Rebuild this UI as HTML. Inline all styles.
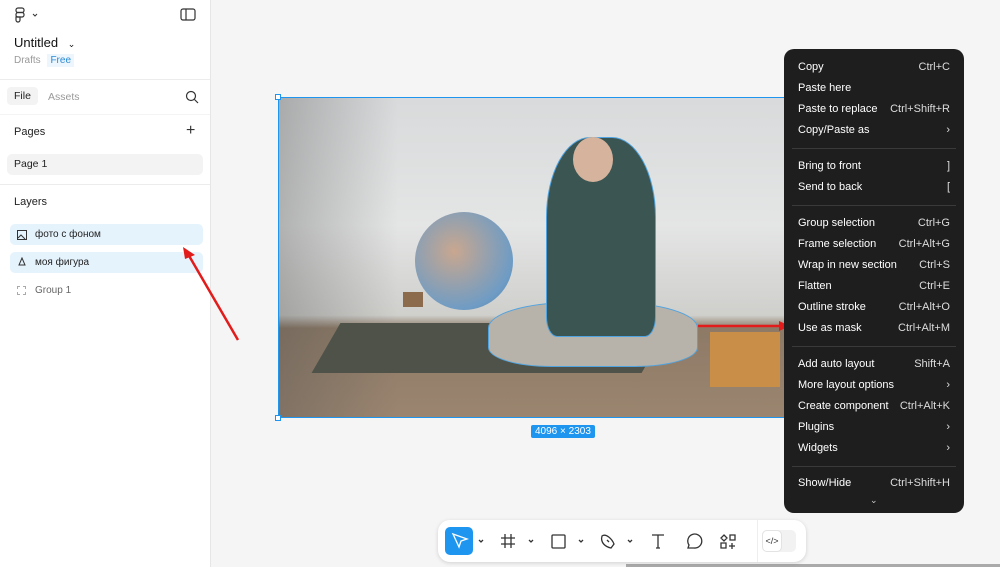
<!DOCTYPE html><html><head><meta charset="utf-8"><style>
*{margin:0;padding:0;box-sizing:border-box}
body{width:1000px;height:567px;overflow:hidden;background:#f5f5f5;font-family:"Liberation Sans",sans-serif;position:relative}
.side{position:absolute;left:0;top:0;width:211px;height:567px;background:#fff;border-right:1px solid #e6e6e6}
.a{position:absolute}
.t{font-size:11px;color:#222}
.hr{position:absolute;left:0;width:210px;height:1px;background:#ececec}
.menu{position:absolute;left:784px;top:49px;width:180px;height:464px;background:#1e1e1e;border-radius:10px;color:#fff;font-size:11px}
.mi{position:absolute;left:14px;right:14px;height:21px;line-height:21px}
.mi span{position:absolute;right:0;top:0;color:#ddd}
.sep{position:absolute;left:8px;right:8px;height:1px;background:#3a3a3a}
.tb{position:absolute;left:438px;top:520px;width:368px;height:42px;background:#fff;border-radius:12px;box-shadow:0 1px 4px rgba(0,0,0,.15)}
</style></head><body>
<div class="side">
<svg class="a" style="left:14px;top:7px" width="26" height="16" viewBox="0 0 26 16"><g fill="none" stroke="#333" stroke-width="1.2"><rect x="2" y="1" width="8" height="4.5" rx="2"/><rect x="2" y="5.5" width="8" height="4.5" rx="2"/><path d="M2 10h4v3a2 2 0 1 1-4 0z"/></g><path d="M19 7l2 2 2-2" stroke="#333" fill="none"/></svg>
<svg class="a" style="left:180px;top:8px" width="16" height="13"><rect x="1" y="1" width="14" height="11" rx="2" fill="none" stroke="#333" stroke-width="1.2"/><path d="M6 1v11" stroke="#333" stroke-width="1.2"/></svg>
<div class="a" style="left:14px;top:35px;font-size:13px;color:#111">Untitled <span style="font-size:9px;margin-left:6px">⌄</span></div>
<div class="a" style="left:14px;top:55px;font-size:10px;color:#999">Drafts <span style="color:#2a8ad4;background:#eef6fd;padding:1px 3px;margin-left:4px">Free</span></div>
<div class="hr" style="top:79px"></div>
<div class="a t" style="left:7px;top:87px;background:#f3f3f3;border-radius:4px;padding:3px 7px;font-size:10.5px">File</div>
<div class="a" style="left:48px;top:91px;font-size:10.5px;color:#999">Assets</div>
<svg class="a" style="left:185px;top:90px" width="14" height="14"><circle cx="6" cy="6" r="4.5" fill="none" stroke="#333" stroke-width="1.2"/><path d="M9.5 9.5l3.5 3.5" stroke="#333" stroke-width="1.2"/></svg>
<div class="hr" style="top:114px;background:#f4f4f4"></div>
<div class="a t" style="left:14px;top:126px">Pages</div>
<div class="a" style="left:186px;top:122px;font-size:16px;color:#333">+</div>
<div class="a t" style="left:7px;top:154px;width:196px;height:21px;background:#f3f3f3;border-radius:5px;padding:4px 7px;font-size:10.5px">Page 1</div>
<div class="hr" style="top:184px"></div>
<div class="a t" style="left:14px;top:196px">Layers</div>
<div class="a t" style="left:10px;top:224px;width:193px;height:21px;background:#e5f3fd;border-radius:5px;padding:5px 0 0 25px;font-size:10px">фото с фоном</div>
<svg class="a" style="left:17px;top:230px" width="10" height="10"><rect x=".5" y=".5" width="9" height="9" fill="none" stroke="#333"/><path d="M1 8l3-3 4 4" stroke="#333" fill="none"/></svg>
<div class="a t" style="left:10px;top:252px;width:193px;height:21px;background:#e5f3fd;border-radius:5px;padding:5px 0 0 25px;font-size:10px">моя фигура</div>
<svg class="a" style="left:17px;top:257px" width="10" height="10"><path d="M5 1L2 8h6z" fill="none" stroke="#333"/></svg>
<div class="a" style="left:35px;top:285px;font-size:10px;color:#666">Group 1</div>
<div class="a" style="left:17px;top:286px;width:9px;height:9px;border:1px dashed #aaa"></div>
</div>
<div class="a" style="left:278px;top:97px;width:508px;height:321px;background:linear-gradient(180deg,#d8dadb 0%,#e4e5e5 40%,#cfcfcc 68%,#8d7a66 72%,#9b8570 100%);overflow:hidden">
<div class="a" style="left:0;top:0;width:120px;height:321px;background:linear-gradient(90deg,rgba(80,80,80,.35),transparent)"></div>
<div class="a" style="left:137px;top:115px;width:98px;height:98px;border-radius:50%;background:radial-gradient(circle at 40% 40%,#c9a78f,#6f9cc4 70%,#4f7fa8)"></div>
<div class="a" style="left:48px;top:226px;width:330px;height:50px;background:#4e5249;transform:skewX(-30deg);"></div>
<div class="a" style="left:210px;top:205px;width:210px;height:65px;border-radius:40% 40% 30% 30%;background:#b7b2aa;border:1px solid #4fa3e0"></div>
<div class="a" style="left:268px;top:40px;width:110px;height:200px;border-radius:40% 40% 10% 10%;background:#3a5552;border:1px solid #4fa3e0"></div>
<div class="a" style="left:295px;top:40px;width:40px;height:45px;border-radius:50%;background:#d6b39c"></div>
<div class="a" style="left:432px;top:235px;width:70px;height:55px;background:#c98e48"></div>
<div class="a" style="left:125px;top:195px;width:20px;height:15px;background:#8c6b4c"></div>
</div>
<div class="a" style="left:278px;top:97px;width:508px;height:321px;border:1px solid #1e96f0"></div>
<div class="a" style="left:275px;top:94px;width:6px;height:6px;background:#fff;border:1px solid #1e96f0"></div>
<div class="a" style="left:275px;top:415px;width:6px;height:6px;background:#fff;border:1px solid #1e96f0"></div>
<div class="a" style="left:531px;top:425px;background:#1e96f0;color:#fff;font-size:10px;padding:1px 4px;border-radius:2px">4096 × 2303</div>
<svg class="a" style="left:0;top:0" width="1000" height="567"><path d="M238 340L188 254" stroke="#e21b1b" stroke-width="2.5"/><path d="M183 247l12 8-10 4z" fill="#e21b1b"/><path d="M698 326h82" stroke="#e21b1b" stroke-width="2.5"/><path d="M790 326l-11-5v10z" fill="#e21b1b"/></svg>
<div class="menu">
<div class="mi" style="top:8px">Copy<span>Ctrl+C</span></div>
<div class="mi" style="top:29px">Paste here</div>
<div class="mi" style="top:50px">Paste to replace<span>Ctrl+Shift+R</span></div>
<div class="mi" style="top:71px">Copy/Paste as<span>›</span></div>
<div class="sep" style="top:99px"></div>
<div class="mi" style="top:107px">Bring to front<span>]</span></div>
<div class="mi" style="top:128px">Send to back<span>[</span></div>
<div class="sep" style="top:156px"></div>
<div class="mi" style="top:164px">Group selection<span>Ctrl+G</span></div>
<div class="mi" style="top:185px">Frame selection<span>Ctrl+Alt+G</span></div>
<div class="mi" style="top:206px">Wrap in new section<span>Ctrl+S</span></div>
<div class="mi" style="top:227px">Flatten<span>Ctrl+E</span></div>
<div class="mi" style="top:248px">Outline stroke<span>Ctrl+Alt+O</span></div>
<div class="mi" style="top:269px">Use as mask<span>Ctrl+Alt+M</span></div>
<div class="sep" style="top:297px"></div>
<div class="mi" style="top:305px">Add auto layout<span>Shift+A</span></div>
<div class="mi" style="top:326px">More layout options<span>›</span></div>
<div class="mi" style="top:347px">Create component<span>Ctrl+Alt+K</span></div>
<div class="mi" style="top:368px">Plugins<span>›</span></div>
<div class="mi" style="top:389px">Widgets<span>›</span></div>
<div class="sep" style="top:417px"></div>
<div class="mi" style="top:424px">Show/Hide<span>Ctrl+Shift+H</span></div>
<div class="a" style="left:86px;top:446px;font-size:9px;color:#ccc">⌄</div>
</div>
<div class="a" style="left:626px;top:564px;width:374px;height:3px;background:#aaa"></div>
<div class="tb">
<div class="a" style="left:7px;top:7px;width:28px;height:28px;background:#1e96f0;border-radius:5px"></div>
<svg class="a" style="left:0;top:0" width="368" height="42" fill="none" stroke="#333" stroke-width="1.3">
<path d="M15 14l14 5-6 2-2 6z" stroke="#fff"/>
<path d="M41 20l2 2 2-2M91 20l2 2 2-2M141 20l2 2 2-2M190 20l2 2 2-2"/>
<path d="M67 14v14M73 14v14M63 18h14M63 24h14"/>
<rect x="114" y="15" width="13" height="13" rx="1"/>
<path d="M164 16c4-3 10 3 12 8l-3 4c-5-1-11-5-9-12zM169 20l2 2"/>
<path d="M214 15h12M220 15v13M218 28h4"/>
<path d="M256 28l-6 0 1-3a7 7 0 1 1 5 3z"/>
<path d="M286 15l3 3-3 3-3-3zM292 15h5v5h-5zM283 23h5v5h-5zM294 23v6M291 26h6"/>
</svg>
<div class="a" style="left:319px;top:0;width:1px;height:42px;background:#eee"></div>
<div class="a" style="left:324px;top:10px;width:34px;height:22px;background:#f2f2f2;border-radius:5px"></div>
<div class="a" style="left:324px;top:10px;width:20px;height:22px;background:#fff;border:1px solid #e3e3e3;border-radius:5px;font-size:9px;line-height:20px;text-align:center;color:#333">&lt;/&gt;</div>
</div>
</body></html>
